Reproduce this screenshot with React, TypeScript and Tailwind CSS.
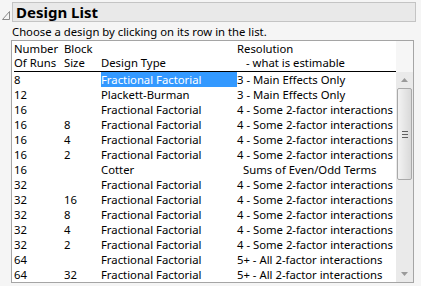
const rows: [string, string, string, string, boolean?][] = [
  ["8", "", "Fractional Factorial", "3 - Main Effects Only"],
  ["12", "", "Plackett-Burman", "3 - Main Effects Only"],
  ["16", "", "Fractional Factorial", "4 - Some 2-factor interactions"],
  ["16", "8", "Fractional Factorial", "4 - Some 2-factor interactions"],
  ["16", "4", "Fractional Factorial", "4 - Some 2-factor interactions"],
  ["16", "2", "Fractional Factorial", "4 - Some 2-factor interactions"],
  ["16", "", "Cotter", "Sums of Even/Odd Terms", true],
  ["32", "", "Fractional Factorial", "4 - Some 2-factor interactions"],
  ["32", "16", "Fractional Factorial", "4 - Some 2-factor interactions"],
  ["32", "8", "Fractional Factorial", "4 - Some 2-factor interactions"],
  ["32", "4", "Fractional Factorial", "4 - Some 2-factor interactions"],
  ["32", "2", "Fractional Factorial", "4 - Some 2-factor interactions"],
  ["64", "", "Fractional Factorial", "5+ - All 2-factor interactions"],
  ["64", "32", "Fractional Factorial", "5+ - All 2-factor interactions"],
];

function ScrollBar() {
  return (
    <div className="flex w-[17px] flex-col bg-[#f4f4f4]">
      <div className="h-[31px] bg-[#f6f6f6]" />
      <div className="flex flex-1 flex-col bg-[#eaeaea]">
        <div className="flex h-[16px] items-center justify-center">
          <svg className="block" width="7" height="4" viewBox="0 0 7 4">
            <path d="M0 4 L3.5 0 L7 4 Z" fill="#9a9a9a" />
          </svg>
        </div>
        <div className="mx-[1px] flex h-[92px] items-center justify-center rounded-[2px] border border-[#a9a9a9] bg-gradient-to-r from-[#f3f3f3] via-[#e6e6e6] to-[#d9d9d9]">
          <div className="flex flex-col gap-[2px]">
            <div className="h-px w-[6px] bg-[#606060]" />
            <div className="h-px w-[6px] bg-[#606060]" />
            <div className="h-px w-[6px] bg-[#606060]" />
          </div>
        </div>
        <div className="flex-1" />
        <div className="flex h-[16px] items-center justify-center">
          <svg className="block" width="7" height="4" viewBox="0 0 7 4">
            <path d="M0 0 L3.5 4 L7 0 Z" fill="#9a9a9a" />
          </svg>
        </div>
      </div>
    </div>
  );
}

export default function App() {
  return (
    <div
      className="h-[286px] w-[421px] overflow-hidden bg-[#f5f5f5] text-[11.3px] leading-[15px] text-black"
      style={{ fontFamily: '"Noto Sans", sans-serif' }}
    >
      <div className="flex h-[22px] items-start pt-[2px]">
        <div className="flex w-[12px] justify-center pt-[9px]">
          <svg className="block" width="8" height="9" viewBox="0 0 8 9">
            <path d="M7.5 0.5 L7.5 8.5 L0.5 8.5 Z" fill="none" stroke="#8a8a8a" strokeWidth="1" />
          </svg>
        </div>
        <div className="flex h-[20px] w-[404px] items-center border border-[#c4c4c4] bg-[#e9e9e9] pl-[3px]">
          <span className="text-[15px] font-bold leading-[18px]">Design List</span>
        </div>
      </div>
      <div className="h-[18px] pl-[12px] pt-[3px] leading-[14px]">Choose a design by clicking on its row in the list.</div>
      <div className="ml-[11px] flex h-[243px] w-[403px] border border-[#a5a5a5] bg-white">
        <div className="flex-1 pl-[2px]">
          <div className="grid grid-cols-[50px_37px_136px_1fr] pb-[1px] pt-[1px] leading-[14px]">
            <div>Number</div>
            <div>Block</div>
            <div />
            <div>Resolution</div>
            <div>Of Runs</div>
            <div>Size</div>
            <div>Design Type</div>
            <div className="pl-[9px]">- what is estimable</div>
          </div>
          <div className="h-px bg-black" />
          {rows.map((r, i) => (
            <div key={i} className="grid h-[15px] grid-cols-[50px_37px_136px_1fr] whitespace-nowrap">
              <div>{r[0]}</div>
              <div>{r[1]}</div>
              <div className={i === 0 ? "bg-[#3399ff] text-white" : ""}>{r[2]}</div>
              <div className={r[4] ? "pl-[6px]" : ""}>{r[3]}</div>
            </div>
          ))}
        </div>
        <ScrollBar />
      </div>
    </div>
  );
}
